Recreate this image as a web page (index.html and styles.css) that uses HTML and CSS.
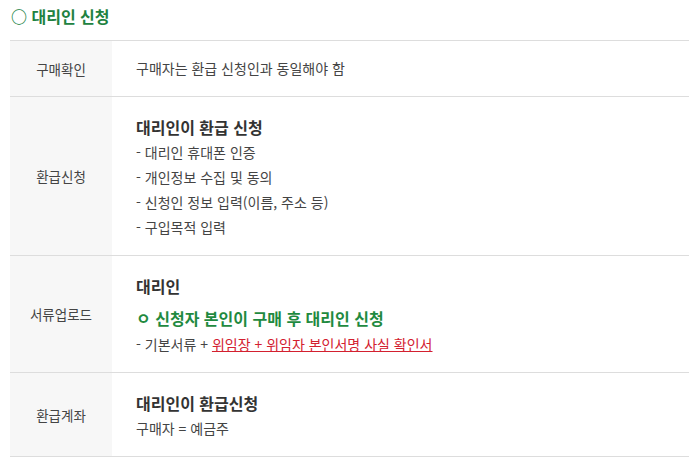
FILE: index.html
```html
<!DOCTYPE html>
<html lang="ko">
<head>
<meta charset="UTF-8" />
<meta name="viewport" content="width=device-width, initial-scale=1" />
<title>대리인 신청</title>
<link rel="stylesheet" href="styles.css">
</head>
<body>
  <h3 class="sec-title">○ 대리인 신청</h3>

  <table class="info-table">
    <tr class="row-short">
      <th>구매확인</th>
      <td>구매자는 환급 신청인과 동일해야 함</td>
    </tr>
    <tr>
      <th>환급신청</th>
      <td>
        <p class="tit">대리인이 환급 신청</p>
        <p>- 대리인 휴대폰 인증</p>
        <p>- 개인정보 수집 및 동의</p>
        <p>- 신청인 정보 입력(이름, 주소 등)</p>
        <p>- 구입목적 입력</p>
      </td>
    </tr>
    <tr>
      <th>서류업로드</th>
      <td>
        <p class="tit">대리인</p>
        <p class="point">ㅇ 신청자 본인이 구매 후 대리인 신청</p>
        <p>- 기본서류 + <a href="#" class="red">위임장 + 위임자 본인서명 사실 확인서</a></p>
      </td>
    </tr>
    <tr>
      <th>환급계좌</th>
      <td>
        <p class="tit">대리인이 환급신청</p>
        <p>구매자 = 예금주</p>
      </td>
    </tr>
  </table>
</body>
</html>
```
FILE: styles.css
```css
body { margin: 0; padding: 0 0 0 10px; background: #fff; font-family: "Noto Sans CJK KR", "Noto Sans", sans-serif; color: #333; }
.sec-title { margin: 0; padding: 5px 0 0 1px; height: 35px; font-size: 16px; line-height: 22px; font-weight: 700; color: #21823f; }
.info-table { width: 100%; border-collapse: collapse; border-top: 1px solid #ddd; }
.info-table th { width: 100px; background: #f7f7f7; font-weight: 400; font-size: 13.5px; color: #444; border-bottom: 1px solid #ddd; }
.info-table td { padding: 18px 0 15px 24px; font-size: 14px; line-height: 25px; color: #444; border-bottom: 1px solid #ddd; }
.row-short td { padding: 15px 0 15px 24px; }
.info-table p { margin: 0; }
.info-table .tit { font-size: 16px; font-weight: 700; color: #333; }
.info-table .point { margin-top: 5px; line-height: 28px; font-size: 16px; font-weight: 700; color: #1f8a40; }
.red { color: #d3202f; text-decoration: underline; }
```
